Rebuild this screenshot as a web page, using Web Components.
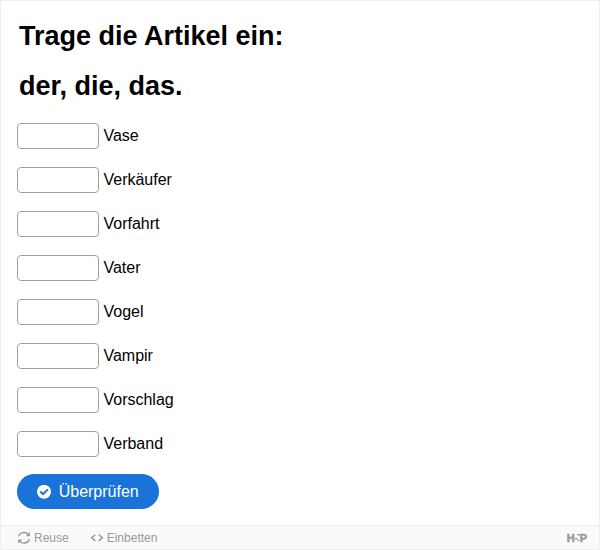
<!DOCTYPE html>
<html lang="de">
<head>
<meta charset="utf-8">
<title>Trage die Artikel ein</title>
<style>
    html, body {
        margin: 0;
        height: 100%;
    }
    body {
        background: #fff;
        color: #000;
        font-family: "Liberation Sans", Arial, sans-serif;
        font-size: 16px;
    }
</style>
</head>
<body>
<blanks-exercise>
    <exercise-title slot="title">
        <div>Trage die Artikel ein:</div>
        <div>der, die, das.</div>
    </exercise-title>
    <blank-row>Vase</blank-row>
    <blank-row>Verkäufer</blank-row>
    <blank-row>Vorfahrt</blank-row>
    <blank-row>Vater</blank-row>
    <blank-row>Vogel</blank-row>
    <blank-row>Vampir</blank-row>
    <blank-row>Vorschlag</blank-row>
    <blank-row>Verband</blank-row>
    <check-button slot="actions">Überprüfen</check-button>
    <action-bar slot="footer">
        <action-item icon="reuse">Reuse</action-item>
        <action-item icon="embed">Einbetten</action-item>
        <brand-mark slot="brand"></brand-mark>
    </action-bar>
</blanks-exercise>

<script>
const iconMap = {
    reuse: `<svg width="14" height="14" viewBox="0 0 14 14" fill="none" stroke="currentColor" stroke-width="1.4">
        <path d="M1.7 5.4A5.5 5.2 0 0 1 11.4 3.5M12.3 8.2A5.5 5.2 0 0 1 2.6 10.1"/>
        <path d="M12.9 1.1V5.2H8.8ZM1.1 12.5V8.4H5.2Z" fill="currentColor" stroke="none"/>
    </svg>`,
    embed: `<svg width="14" height="14" viewBox="0 0 14 14" fill="none" stroke="currentColor" stroke-width="1.5">
        <path d="M5.3 3.7L1.6 6.8L5.3 9.9M8.7 3.7L12.4 6.8L8.7 9.9"/>
    </svg>`
};

class BaseElement extends HTMLElement {
    constructor() {
        super();
        this._shadowRoot = this.attachShadow({mode: 'open'});
        this._shadowRoot.innerHTML = this.constructor.markup;
    }
}

class BlanksExercise extends BaseElement {
    static markup = `
        <style>
            :host {
                display: flex;
                flex-direction: column;
                box-sizing: border-box;
                height: 100%;
                border: 1px solid #eee;
            }
            .content {
                flex: 1;
                padding: 10px 16px 0;
            }
            .rows {
                display: grid;
                gap: 18px;
                margin: 12px 0 17px;
            }
        </style>
        <div class="content">
            <slot name="title"></slot>
            <div class="rows"><slot></slot></div>
            <slot name="actions"></slot>
        </div>
        <slot name="footer"></slot>
    `;
}

class ExerciseTitle extends BaseElement {
    static markup = `
        <style>
            :host {
                display: block;
                padding-left: 2px;
                font-size: 27px;
                font-weight: bold;
                line-height: 50px;
            }
        </style>
        <slot></slot>
    `;
}

class BlankRow extends BaseElement {
    static markup = `
        <style>
            :host {
                display: flex;
                align-items: center;
                gap: 4.45px;
                height: 26px;
            }
            input {
                box-sizing: border-box;
                width: 82px;
                height: 26px;
                margin: 0;
                padding: 3px 10px;
                border: 1px solid #a0a0a0;
                border-radius: 4px;
                background: #fff;
                font: inherit;
            }
        </style>
        <input type="text" autocomplete="off">
        <span><slot></slot></span>
    `;
}

class CheckButton extends BaseElement {
    static markup = `
        <style>
            :host {
                display: block;
            }
            button {
                display: flex;
                align-items: center;
                gap: 7.7px;
                height: 35px;
                padding: 0 20px;
                border: 0;
                border-radius: 18px;
                background: #1a73d9;
                color: #fff;
                font: inherit;
            }
        </style>
        <button type="button">
            <svg width="14" height="14" viewBox="0 0 14 14">
                <circle cx="7" cy="6.8" r="7" fill="#fff"/>
                <path d="M3.3 6.5L6.1 9.2L10.9 4.4" fill="none" stroke="#1a73d9" stroke-width="2"/>
            </svg>
            <slot></slot>
        </button>
    `;
}

class ActionBar extends BaseElement {
    static markup = `
        <style>
            :host {
                display: flex;
                align-items: center;
                gap: 21px;
                box-sizing: border-box;
                height: 24px;
                padding: 0 12px 0 16px;
                border-top: 1px solid #eee;
                background: #fafafa;
                color: #999;
                font-size: 12px;
            }
            .brand {
                margin-left: auto;
            }
        </style>
        <slot></slot>
        <div class="brand"><slot name="brand"></slot></div>
    `;
}

class ActionItem extends BaseElement {
    static markup = `
        <style>
            :host {
                display: flex;
                align-items: center;
                gap: 3px;
            }
            .icon {
                display: flex;
            }
        </style>
        <span class="icon"></span>
        <slot></slot>
    `;

    connectedCallback() {
        this._shadowRoot.querySelector('.icon').innerHTML = iconMap[this.getAttribute('icon')];
    }
}

class BrandMark extends BaseElement {
    static markup = `
        <style>
            :host {
                display: flex;
                align-items: center;
                font-size: 11px;
                font-weight: bold;
                line-height: 12px;
                -webkit-text-stroke: .5px currentColor;
            }
        </style>
        <span>H</span>
        <svg width="5" height="8" viewBox="0 0 5 8" fill="currentColor">
            <path d="M0 4H2.4V5.4H0ZM2.2 0H5V1.5H2.2ZM2.6 5.6H4.2V7H2.6Z"/>
        </svg>
        <span>P</span>
    `;
}

customElements.define('blanks-exercise', BlanksExercise);
customElements.define('exercise-title', ExerciseTitle);
customElements.define('blank-row', BlankRow);
customElements.define('check-button', CheckButton);
customElements.define('action-bar', ActionBar);
customElements.define('action-item', ActionItem);
customElements.define('brand-mark', BrandMark);
</script>
</body>
</html>
